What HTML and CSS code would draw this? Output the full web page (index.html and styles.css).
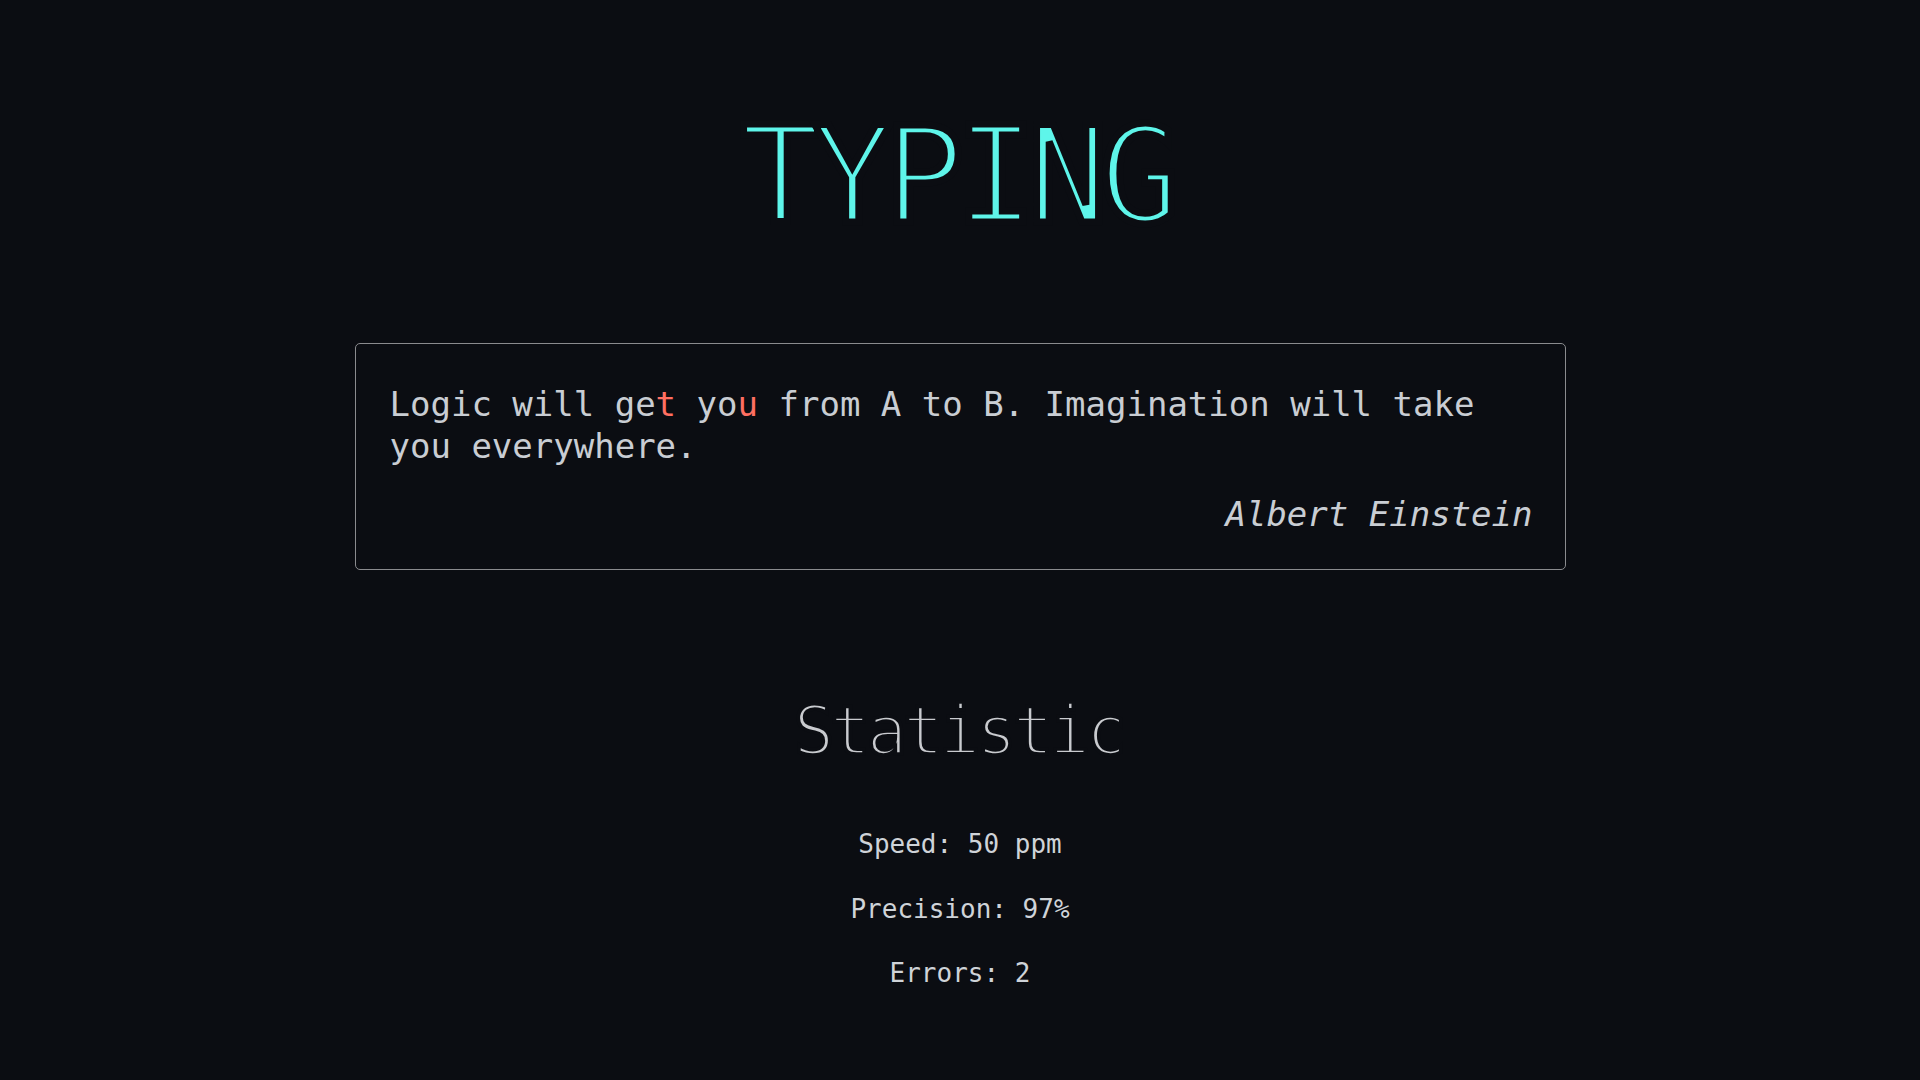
FILE: index.html
```html
<!DOCTYPE html>
<html lang="en">
<head>
<meta charset="utf-8">
<title>Typing</title>
<link rel="stylesheet" href="styles.css">
</head>
<body>
<main class="page">
  <h1 class="title">TYPING</h1>
  <section class="quote-box">
    <p class="quote-text">Logic will ge<span class="err">t</span> yo<span class="err">u</span> from A to B. Imagination will take you everywhere.</p>
    <p class="quote-author">Albert Einstein</p>
  </section>
  <h2 class="stats-title">Statistic</h2>
  <div class="stats">
    <p class="stat">Speed: 50 ppm</p>
    <p class="stat">Precision: 97%</p>
    <p class="stat">Errors: 2</p>
  </div>
</main>
</body>
</html>
```
FILE: styles.css
```css
html, body {
  margin: 0;
  padding: 0;
  background: #0b0d12;
}
body {
  font-family: "DejaVu Sans Mono", "Liberation Mono", monospace;
  color: #cbd0d6;
  min-height: 1080px;
}
.page {
  display: flex;
  flex-direction: column;
  align-items: center;
  padding-top: 110px;
}
.title {
  margin: 0 8.3px 0 0;
  font-size: 133px;
  line-height: 133px;
  font-weight: 400;
  letter-spacing: -8.3px;
  color: #5ef5ea;
  -webkit-text-stroke: 7px #0b0d12;
  paint-order: fill stroke;
}
.quote-box {
  margin-top: 100px;
  width: 1211px;
  box-sizing: border-box;
  border: 1px solid #8a8b8e;
  border-radius: 5px;
  padding: 39px 32px 34px 34px;
}
.quote-text {
  margin: 0;
  font-size: 34px;
  line-height: 42px;
  color: #c9cdd3;
}
.err {
  color: #ff6f61;
}
.quote-author {
  margin: 26px 0 0;
  font-size: 34px;
  line-height: 42px;
  font-style: italic;
  text-align: right;
  color: #c9cdd3;
}
.stats-title {
  margin: 128px 3.8px 0 0;
  font-size: 67px;
  line-height: 67px;
  font-weight: 400;
  letter-spacing: -3.8px;
  color: #c9cbcf;
  -webkit-text-stroke: 3.6px #0b0d12;
  paint-order: fill stroke;
}
.stats {
  margin-top: 66px;
  display: flex;
  flex-direction: column;
  align-items: center;
  gap: 38.5px;
}
.stat {
  margin: 0;
  font-size: 26px;
  line-height: 26px;
  color: #cfd3d8;
}
```
